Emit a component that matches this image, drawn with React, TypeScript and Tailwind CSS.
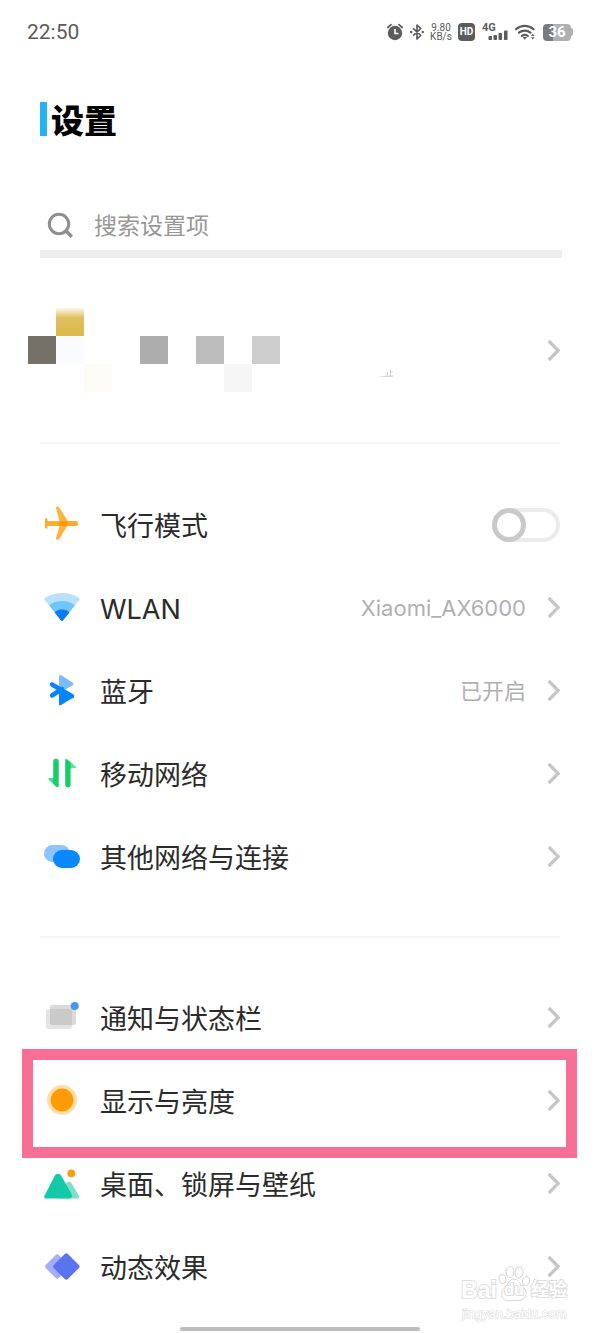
import React, { useState } from 'react';

const AirplaneIcon = () => (
  <>
    <path d="M12.2 2.800c-.6-1.300.1-2.300 1.300-2.300 1 0 1.500.4 2 1.200L24 15.500v3.500l-8.500 13.500c-.5.8-1 1.300-2 1.300-1.200 0-1.900-1-1.300-2.300L15.500 20v-5z" fill="#ffb244" />
    <path d="M1 13.500c0-1.600 2.600-1.600 2.600 0V15h28.900a2.600 2.600 0 0 1 0 5H3.600v1.500c0 1.600-2.600 1.600-2.600 0z" fill="#ffab2e" />
    <path d="M15.500 15H24v5h-8.500z" fill="#ff990a" />
  </>
);

const WlanIcon = () => (
  <>
    <path d="M18 32 1 11.500Q-.5 9.500 1.500 8.500C11 2.500 25 2.500 34.500 8.500q2 1 .5 3z" fill="#b9e1ff" />
    <path d="M18 32 6 17.500Q5 16 6.700 15C13 11 23 11 29.300 15q1.700 1 .7 2.500z" fill="#6fc6ff" />
    <path d="m16.800 31.200-5.600-6.900q-1-1.200.6-2c3.500-2.400 8.900-2.400 12.400 0q1.600.8.6 2l-5.600 6.900q-1.200 1.400-2.400 0z" fill="#0a7af8" />
  </>
);

const BluetoothIcon = () => (
  <>
    <path d="M15 4.500c0-1.500 1-2 2.200-1.200l11.600 7.400c1.200.8 1.200 1.800 0 2.600L15 21z" fill="#7cbcfd" />
    <path d="m8 12.500 20 11.700M8 23.500l10-6.500" stroke="#0a84fa" strokeWidth="4.500" strokeLinecap="round" fill="none" />
    <path d="m15 16 13.800 7.200c1.200.8 1.200 1.800 0 2.600l-11.600 7.300c-1.200.8-2.200.3-2.200-1.200z" fill="#0a84fa" />
  </>
);

const MobileDataIcon = () => (
  <>
    <path d="M10 23H5.500c-1.200 0-1.600.9-.7 1.700l7.500 7.300z" fill="#4fdc8e" />
    <path d="M9.200 6.500a2.700 2.700 0 0 1 5.500 0V31c0 1.300-1.200 1.700-2.200.8l-3.300-3.300z" fill="#16ce69" />
    <path d="M26 13.300h5c1.200 0 1.500-.9.6-1.700L24 4.500z" fill="#5fe09a" />
    <path d="M21.200 5.400c0-1.400 1.100-1.800 2.100-.8l3.300 3.300v21.800a2.700 2.700 0 0 1-5.400 0z" fill="#16ce69" />
  </>
);

const ConnectionIcon = () => (
  <>
    <rect x="0" y="7" width="26" height="17" rx="8.500" fill="#8fc3ff" />
    <rect x="9" y="12" width="27" height="18" rx="9" fill="#0a88ff" />
  </>
);

const NotificationIcon = () => (
  <>
    <rect x="2" y="10" width="26" height="20" rx="2.500" fill="#e4e4e4" />
    <rect x="6" y="6" width="26" height="20" rx="2.500" fill="#dadada" />
    <path d="M6 10h20q2 0 2 2v14H8.500Q6 26 6 23.500z" fill="#cacaca" />
    <circle cx="30.700" cy="7" r="4" fill="#4499ec" />
  </>
);

const BrightnessIcon = () => (
  <>
    <circle cx="18" cy="18" r="15" fill="#ffdea8" />
    <circle cx="18" cy="18" r="11.400" fill="#ff9b05" />
  </>
);

const WallpaperIcon = () => (
  <>
    <path d="M22.300 18.500c1.500-2.300 4-2.300 5.400 0L35 31c.9 1.500.3 2.500-1.300 2.500H15z" fill="#82dec9" />
    <path d="M10.600 11c1.800-3 5-3 6.800 0l9.900 17.500c1.300 2.800.7 5-1.800 5H2C.3 33.500-.4 32.300.5 30.700z" fill="#12c9a8" />
    <circle cx="27.300" cy="8.300" r="3.900" fill="#fb9b12" />
  </>
);

const MotionIcon = () => (
  <>
    <rect x="4" y="9.300" width="18.500" height="18.500" rx="2.500" transform="rotate(45 13.250 18.550)" fill="#a3aef8" />
    <rect x="12.300" y="8.500" width="20" height="20" rx="2.500" transform="rotate(45 22.300 18.500)" fill="#5a74f1" />
  </>
);

interface SettingItem {
  id: string;
  label: string;
  icon: React.ReactNode;
  value?: string;
  highlighted?: boolean;
}

const NETWORK_ITEMS: SettingItem[] = [
  { id: 'wlan', label: 'WLAN', icon: <WlanIcon />, value: 'Xiaomi_AX6000' },
  { id: 'bluetooth', label: '蓝牙', icon: <BluetoothIcon />, value: '已开启' },
  { id: 'mobile', label: '移动网络', icon: <MobileDataIcon /> },
  { id: 'connections', label: '其他网络与连接', icon: <ConnectionIcon /> },
];

const DISPLAY_ITEMS: SettingItem[] = [
  { id: 'notifications', label: '通知与状态栏', icon: <NotificationIcon /> },
  { id: 'display', label: '显示与亮度', icon: <BrightnessIcon />, highlighted: true },
  { id: 'wallpaper', label: '桌面、锁屏与壁纸', icon: <WallpaperIcon /> },
  { id: 'motion', label: '动态效果', icon: <MotionIcon /> },
];

// Pixelated account name, 9 columns x 3 rows
const MOSAIC = [
  '', 'bg-linear-to-b from-[#fdf8e8] via-[#dfbf5c] via-35% to-[#dbb94e]', '', '', '', '', '', '', '',
  'bg-[#757169]', 'bg-[#fafbff]', '', '', 'bg-[#adadad]', '', 'bg-[#bdbdbd]', '', 'bg-[#cdcdcd]',
  '', '', 'bg-[#fefcf7]', '', '', '', '', 'bg-[#f6f6f6]', '',
];

function Chevron() {
  return (
    <svg className="w-3.5 h-[23px] shrink-0" viewBox="0 0 14 23" fill="none" aria-hidden="true">
      <path d="m2.700 2 9.500 9.500-9.500 9.500" stroke="#c6c6c6" strokeWidth="3.200" />
    </svg>
  );
}

function RowIcon({ children }: { children: React.ReactNode }) {
  return (
    <svg className="w-9 h-[37px] shrink-0" viewBox="0 0 36 37" aria-hidden="true">
      {children}
    </svg>
  );
}

function SettingRow({ item }: { item: SettingItem }) {
  return (
    <li className="relative">
      <button type="button" className="flex items-center gap-5 w-full h-[83px] pl-1 text-left">
        <RowIcon>{item.icon}</RowIcon>
        <span className="flex-1 pt-1 text-[27px] leading-9 text-[#2b2b2b]">{item.label}</span>
        {item.value && <span className="text-[22px] leading-8 text-[#b0b0b0]">{item.value}</span>}
        <Chevron />
      </button>
      {item.highlighted && (
        <div className="absolute -top-2.5 -bottom-4 -left-[18px] -right-[17px] border-[11px] border-[#f76f96] pointer-events-none" />
      )}
    </li>
  );
}

function StatusBar() {
  return (
    <div className="flex items-center justify-between h-16 pl-[27px] pr-[26px] text-[#5c5c5c]">
      <span className="text-[21px] leading-6 font-['Roboto',sans-serif]">22:50</span>
      <div className="flex items-center gap-[7px]">
        {/* Alarm */}
        <svg className="w-4 h-[18px]" viewBox="0 0 16 18" fill="none" aria-hidden="true">
          <circle cx="8" cy="10" r="7.200" fill="#5c5c5c" />
          <path d="M8 6v4.500h3.500" stroke="#fff" strokeWidth="1.600" />
          <path d="M.8 4.500 4 1.600M15.200 4.500 12 1.600" stroke="#5c5c5c" strokeWidth="1.700" strokeLinecap="round" />
        </svg>
        {/* Bluetooth, connected */}
        <svg className="w-3.5 h-[18px]" viewBox="0 0 14 18" fill="none" aria-hidden="true">
          <path d="m3.200 5.300 7.500 7.200L7 16V2l3.700 3.500-7.500 7.200" stroke="#5c5c5c" strokeWidth="1.700" strokeLinejoin="round" />
          <circle cx="1.200" cy="9" r="1.200" fill="#5c5c5c" />
          <circle cx="12.800" cy="9" r="1.200" fill="#5c5c5c" />
        </svg>
        <div className="flex flex-col items-center w-5 text-[10px] leading-[9px] whitespace-nowrap font-['Roboto',sans-serif]">
          <span>9.80</span>
          <span>KB/s</span>
        </div>
        <span className="flex items-center justify-center w-[17px] h-[18px] rounded bg-[#5c5c5c] text-[10px] leading-3 font-bold text-white font-['Roboto',sans-serif]">HD</span>
        {/* Mobile signal */}
        <div className="relative w-[26px] h-[18px]">
          <span className="absolute left-0 top-0 text-[11px] leading-[10px] font-bold font-['Roboto',sans-serif]">4G</span>
          <svg className="w-full h-full" viewBox="0 0 26 18" fill="#5c5c5c" aria-hidden="true">
            <rect x="6.500" y="13" width="3.500" height="4" rx=".8" />
            <rect x="11.500" y="12" width="3.500" height="5" rx=".8" />
            <rect x="16.500" y="10" width="3.500" height="7" rx=".8" />
            <rect x="22" y="7.500" width="3.500" height="9.500" rx=".8" />
          </svg>
        </div>
        <svg className="w-[21px] h-[18px]" viewBox="0 0 21 18" fill="none" aria-hidden="true">
          <path d="M1 6.200c5-4.500 12.500-4.500 17.500 0M4 9.700c3.300-2.900 8.300-2.900 11.500 0M6.800 13c1.800-1.400 4.200-1.400 6 0" stroke="#5c5c5c" strokeWidth="2.200" strokeLinecap="round" />
          <path d="m7.500 14 2.300 2.700 2.300-2.700z" fill="#5c5c5c" />
          <path d="m16 13 1.800-2.300 1.800 2.300zM16 14.200l1.800 2.300 1.800-2.300z" fill="#5c5c5c" />
        </svg>
        {/* Battery */}
        <div className="flex items-center w-[31px]">
          <span className="flex items-center justify-center w-7 h-[17px] rounded bg-linear-to-r from-[#7b7b7b] from-36% to-[#b0b0b0] to-36% text-[15px] leading-4 font-bold text-white font-['Roboto',sans-serif]">
            36
          </span>
          <span className="w-0.5 h-2 rounded-r-full bg-[#b0b0b0]" />
        </div>
      </div>
    </div>
  );
}

function Watermark() {
  return (
    <div className="absolute right-[33px] bottom-3 flex flex-col items-center text-white pointer-events-none">
      <div className="flex items-end h-10 pb-1 font-bold [-webkit-text-stroke:2px_#dedede] font-['Liberation_Sans','Noto_Sans_CJK_SC',sans-serif]">
        <span className="text-[23px] leading-6 [paint-order:stroke_fill]">Bai</span>
        <span className="relative flex items-end justify-center w-[34px] h-9">
          <svg className="absolute inset-0 w-full h-full" viewBox="0 0 32 36" fill="#fff" stroke="#d4d4d4" aria-hidden="true">
            <ellipse cx="4.500" cy="13" rx="3.500" ry="4.500" transform="rotate(-15 4.500 13)" />
            <ellipse cx="12" cy="6" rx="4" ry="5.500" />
            <ellipse cx="21" cy="6.500" rx="4" ry="5.500" transform="rotate(10 21 6.500)" />
            <ellipse cx="28" cy="15" rx="3.500" ry="4.500" transform="rotate(15 28 15)" />
            <path d="M16 13c4 0 5.500 4 8 7 3 3 5 5 4 9-1 5-6 6-12 5.500C10 35 5 35 4 30c-1-4 1-7 4-10 2.500-3 4-7 8-7z" />
          </svg>
          <span className="relative text-base leading-6 [paint-order:stroke_fill]">du</span>
        </span>
        <span className="text-lg leading-6 [paint-order:stroke_fill]">经验</span>
      </div>
      <span className="text-[13px] leading-[15px] [paint-order:stroke_fill] [-webkit-text-stroke:1px_#dadada] font-['Liberation_Sans',sans-serif]">jingyan.baidu.com</span>
    </div>
  );
}

export default function App() {
  const [airplane, setAirplane] = useState(false);
  const [query, setQuery] = useState('');

  return (
    <div className="relative bg-white font-['Inter','Noto_Sans_CJK_SC',sans-serif]">
      <StatusBar />

      <header className="px-10 pt-[38px]">
        <div className="flex items-center gap-1">
          <span className="w-[7px] h-[34px] bg-[#27b1f5]" />
          <h1 className="pt-1 text-[33px] leading-[30px] font-black text-black">设置</h1>
        </div>

        <form className="flex items-center gap-[21px] h-[58px] mt-16 -mr-0.5 pl-[7px] border-b-8 border-[#eeeeee]" onSubmit={(e) => e.preventDefault()}>
          <svg className="w-[26px] h-[26px] shrink-0" viewBox="0 0 26 26" fill="none" aria-hidden="true">
            <circle cx="12" cy="12" r="9.700" stroke="#8f8f8f" strokeWidth="3" />
            <path d="m18.800 18.800 6 6" stroke="#8f8f8f" strokeWidth="3.500" />
          </svg>
          <input
            type="search"
            aria-label="搜索设置项"
            placeholder="搜索设置项"
            value={query}
            onChange={(e) => setQuery(e.target.value)}
            className="flex-1 min-w-0 h-9 pt-0.5 text-[23px] leading-8 text-[#2b2b2b] placeholder:text-[#979797] outline-none"
          />
        </form>
      </header>

      <main>
        {/* Account */}
        <button type="button" aria-label="账号" className="flex items-center w-full h-[184px] pl-7 pr-10">
          <span className="grid grid-cols-[repeat(9,28px)] grid-rows-[repeat(3,28px)]">
            {MOSAIC.map((color, i) => (
              <span key={i} className={color} />
            ))}
          </span>
          <svg className="w-7 h-3 ml-[86px] mt-11" viewBox="0 0 28 12" aria-hidden="true">
            <path d="m12 10.500 15-1v1.300H14z" fill="#c8c8c8" />
            <path d="M21.500 6v4M24.500 3.500V10M24.500 6h2" stroke="#cfcfcf" strokeWidth="1" fill="none" />
          </svg>
          <span className="flex-1" />
          <Chevron />
        </button>

        <div className="px-10">
          <ul className="pt-[39px] pb-[38px] border-t-2 border-[#f5f5f5]">
            <li>
              <label className="flex items-center gap-5 h-[83px] pl-1">
                <RowIcon>
                  <AirplaneIcon />
                </RowIcon>
                <span className="flex-1 pt-1 text-[27px] leading-9 text-[#2b2b2b]">飞行模式</span>
                <input
                  type="checkbox"
                  role="switch"
                  checked={airplane}
                  onChange={(e) => setAirplane(e.target.checked)}
                  className="flex items-center appearance-none w-[68px] h-[34px] rounded-full border-4 border-[#ebebeb] before:w-[34px] before:h-[34px] before:-ml-1 before:shrink-0 before:rounded-full before:border-[5px] before:border-[#c9c9c9] before:bg-white checked:justify-end checked:before:-mr-1 checked:before:border-[#27b1f5]"
                />
              </label>
            </li>
            {NETWORK_ITEMS.map((item) => (
              <SettingRow key={item.id} item={item} />
            ))}
          </ul>

          <ul className="pt-[38px] border-t-2 border-[#f5f5f5]">
            {DISPLAY_ITEMS.map((item) => (
              <SettingRow key={item.id} item={item} />
            ))}
          </ul>
        </div>
      </main>

      {/* Home indicator */}
      <div className="pt-[19px] pb-0.5">
        <div className="w-2/5 h-1 mx-auto rounded-full bg-[#bcbcbc]" />
      </div>

      <Watermark />
    </div>
  );
}
